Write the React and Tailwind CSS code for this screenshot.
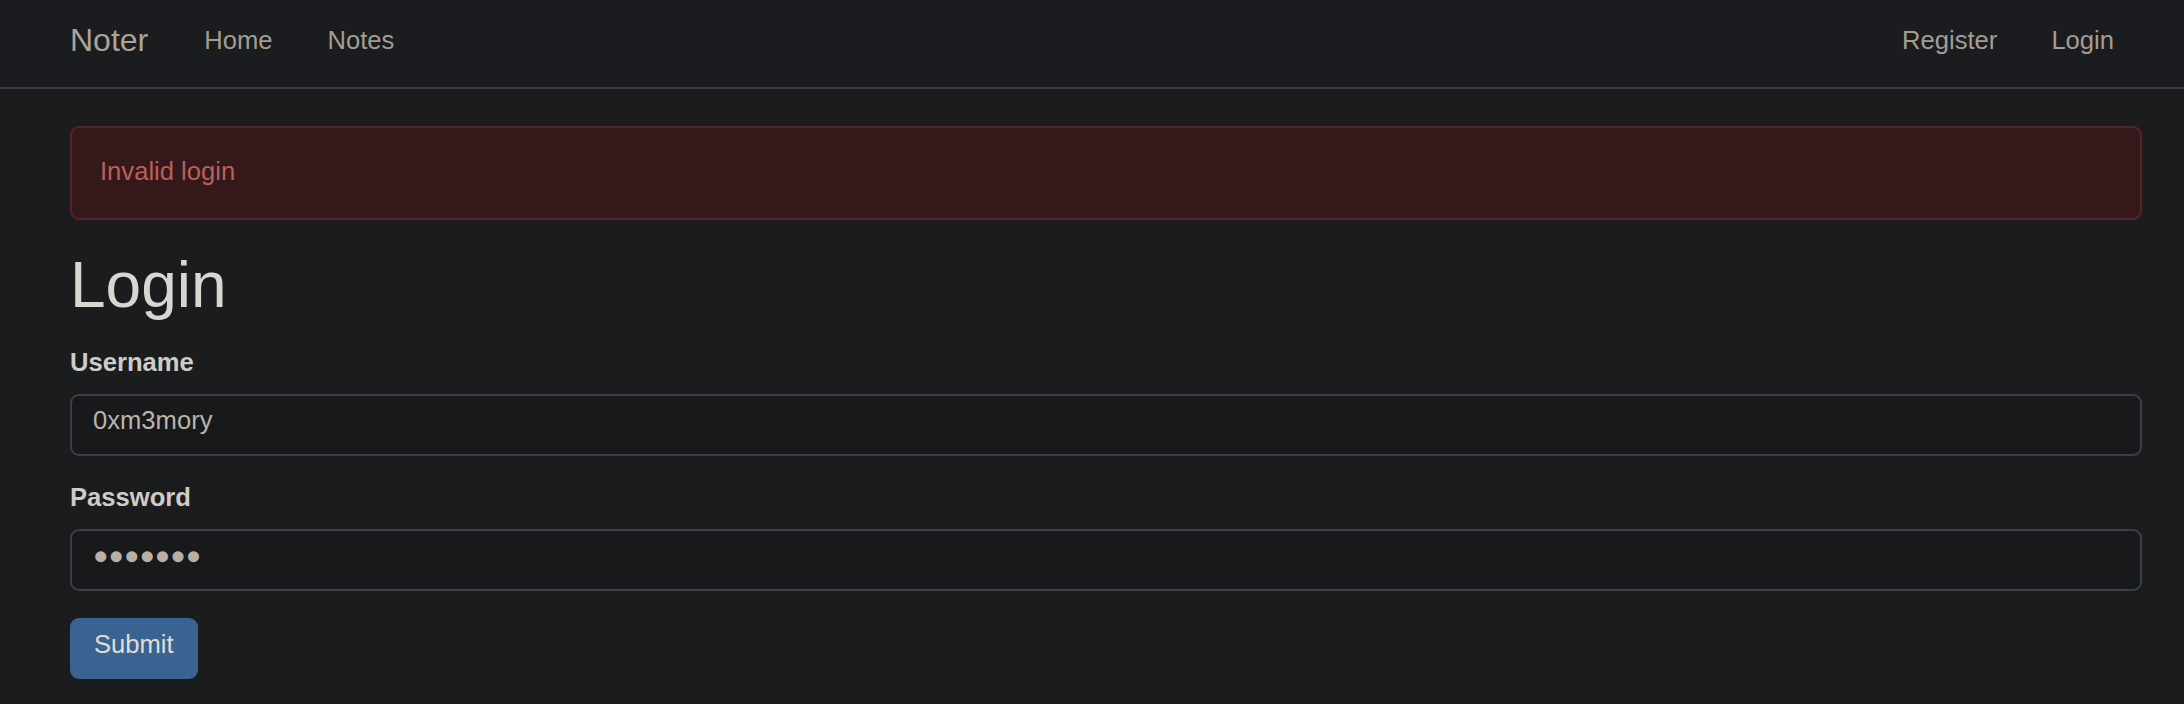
import React from 'react';

const font = { fontFamily: '"Liberation Sans", Arial, sans-serif' };

const Navbar = () => {
    return (
        <nav className="h-[89px] border-b-2 border-[#3a3d41] bg-[#1b1c1f] px-[70px] pb-[7px] flex items-center">
            <a href="#" className="text-[32px] leading-[48px] text-[#a9a398] mr-[56px]">Noter</a>
            <a href="#" className="text-[25.6px] leading-[38px] text-[#a39d93] mr-[55px]">Home</a>
            <a href="#" className="text-[25.6px] leading-[38px] text-[#a39d93]">Notes</a>
            <div className="ml-auto flex items-center gap-[54px]">
                <a href="#" className="text-[25.6px] leading-[38px] text-[#a39d93]">Register</a>
                <a href="#" className="text-[25.6px] leading-[38px] text-[#a39d93]">Login</a>
            </div>
        </nav>
    );
};

const App = () => {
    return (
        <div className="min-h-[704px] bg-[#1b1c1e] text-[#d5d1cb]" style={font}>
            <Navbar />
            <div className="pl-[70px] pr-[42px] pt-[37px]">
                {/* Error alert */}
                <div className="h-[94px] flex items-center px-[28px] pb-[3px] rounded-[9px] border-2 border-[#55242a] bg-[#35181a] text-[#bb5f5a] text-[25.6px]">
                    Invalid login
                </div>
                <h1 className="mt-[27px] text-[64px] leading-[77px] text-[#d9d5cf]">Login</h1>
                <form onSubmit={(e) => e.preventDefault()}>
                    <label className="block mt-[19px] text-[25.6px] leading-[38px] font-bold text-[#cfcbc5]">Username</label>
                    <input
                        type="text"
                        defaultValue="0xm3mory"
                        className="block w-full mt-[13px] h-[62px] px-[21px] pb-[9px] rounded-[9px] border-2 border-[#3c4044] bg-[#18191b] text-[25.6px] text-[#bab4ab] outline-none"
                        style={font}
                    />
                    <label className="block mt-[22px] text-[25.6px] leading-[38px] font-bold text-[#cfcbc5]">Password</label>
                    <input
                        type="text"
                        readOnly
                        defaultValue="●●●●●●●"
                        className="block w-full mt-[13px] h-[62px] px-[21px] pb-[9px] rounded-[9px] border-2 border-[#3c4044] bg-[#18191b] text-[25.6px] text-[#b8b0a4] outline-none"
                        style={font}
                    />
                    <button
                        type="submit"
                        className="mt-[27px] h-[61px] px-[24px] pb-[9px] rounded-[9px] bg-[#3a6391] text-[#e0ddd8] text-[25.6px]"
                        style={font}
                    >
                        Submit
                    </button>
                </form>
            </div>
        </div>
    );
};

export default App;
